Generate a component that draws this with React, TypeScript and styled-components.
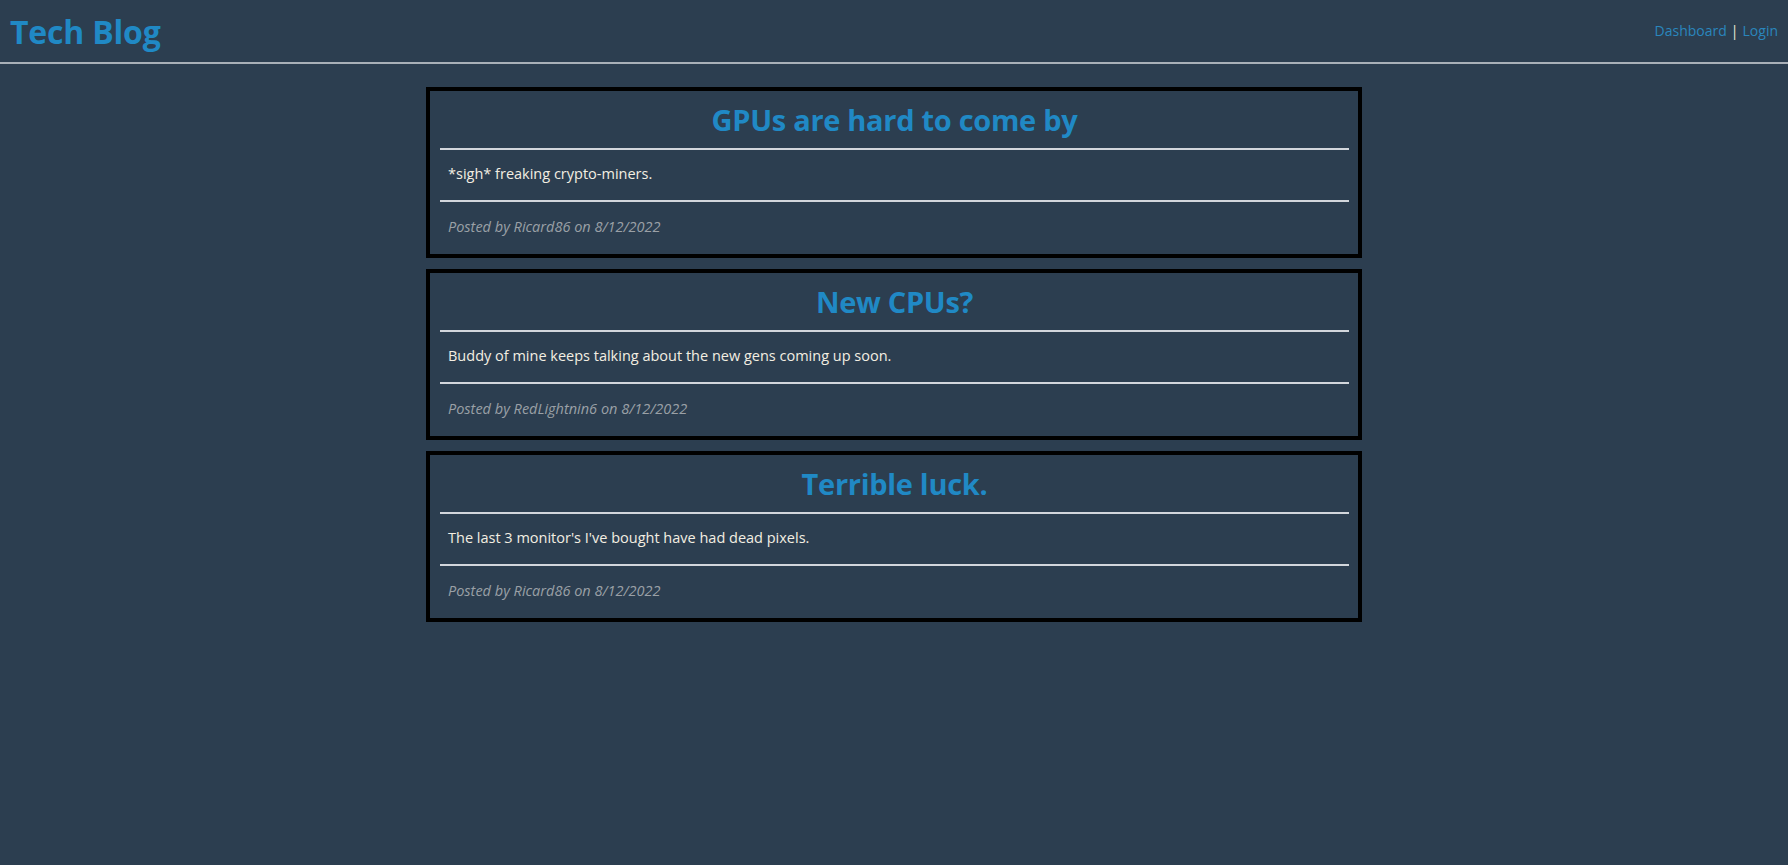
import React from "react";
import styled, { createGlobalStyle } from "styled-components";

const Global = createGlobalStyle`
  html, body {
    margin: 0;
    padding: 0;
    background: #2c3e50;
    font-family: "Open Sans", "Noto Sans", sans-serif;
  }
`;

const Header = styled.header`
  display: flex;
  align-items: center;
  justify-content: space-between;
  height: 62px;
  padding: 0 10px;
  border-bottom: 2px solid #a9b0b8;
`;

const Brand = styled.h1`
  margin: 0;
  font-size: 32px;
  font-weight: 700;
  color: #2089c5;
  letter-spacing: -0.2px;
`;

const Nav = styled.nav`
  font-size: 14px;
  color: #f0ead6;
  display: flex;
  align-items: center;
  gap: 4px;
  margin-top: -2px;
`;

const NavLink = styled.a`
  color: #2a86bd;
  text-decoration: none;
`;

const Main = styled.main`
  display: flex;
  flex-direction: column;
  align-items: center;
  gap: 11px;
  padding-top: 23px;
`;

const Card = styled.article`
  box-sizing: border-box;
  width: 936px;
  border: 4px solid #000;
  padding: 0 9px 0 10px;
  display: flex;
  flex-direction: column;
`;

const Title = styled.h2`
  margin: 0;
  height: 57px;
  display: flex;
  align-items: center;
  justify-content: center;
  box-sizing: border-box;
  padding-bottom: 1px;
  font-size: 29px;
  font-weight: 700;
  color: #2089c5;
  letter-spacing: -0.3px;
`;

const Rule = styled.div`
  height: 2px;
  background: #d2d6dc;
`;

const Row = styled.div<{ $h: number }>`
  height: ${(p) => p.$h}px;
  display: flex;
  align-items: center;
  padding-left: 8px;
  box-sizing: border-box;
`;

const Body = styled.p`
  margin: 0;
  font-size: 14.5px;
  color: #f3eee2;
  margin-top: -3px;
`;

const Meta = styled.p`
  margin: 0;
  font-size: 14.5px;
  font-style: italic;
  color: #9aa0a6;
  margin-top: -3px;
`;

const posts = [
  {
    title: "GPUs are hard to come by",
    body: "*sigh* freaking crypto-miners.",
    author: "Ricard86",
    date: "8/12/2022",
  },
  {
    title: "New CPUs?",
    body: "Buddy of mine keeps talking about the new gens coming up soon.",
    author: "RedLightnin6",
    date: "8/12/2022",
  },
  {
    title: "Terrible luck.",
    body: "The last 3 monitor's I've bought have had dead pixels.",
    author: "Ricard86",
    date: "8/12/2022",
  },
];

export default function App() {
  return (
    <>
      <Global />
      <Header>
        <Brand>Tech Blog</Brand>
        <Nav>
          <NavLink href="#">Dashboard</NavLink>|<NavLink href="#">Login</NavLink>
        </Nav>
      </Header>
      <Main>
        {posts.map((p) => (
          <Card key={p.title}>
            <Title>{p.title}</Title>
            <Rule />
            <Row $h={50}>
              <Body>{p.body}</Body>
            </Row>
            <Rule />
            <Row $h={52}>
              <Meta>
                Posted by {p.author} on {p.date}
              </Meta>
            </Row>
          </Card>
        ))}
      </Main>
    </>
  );
}
